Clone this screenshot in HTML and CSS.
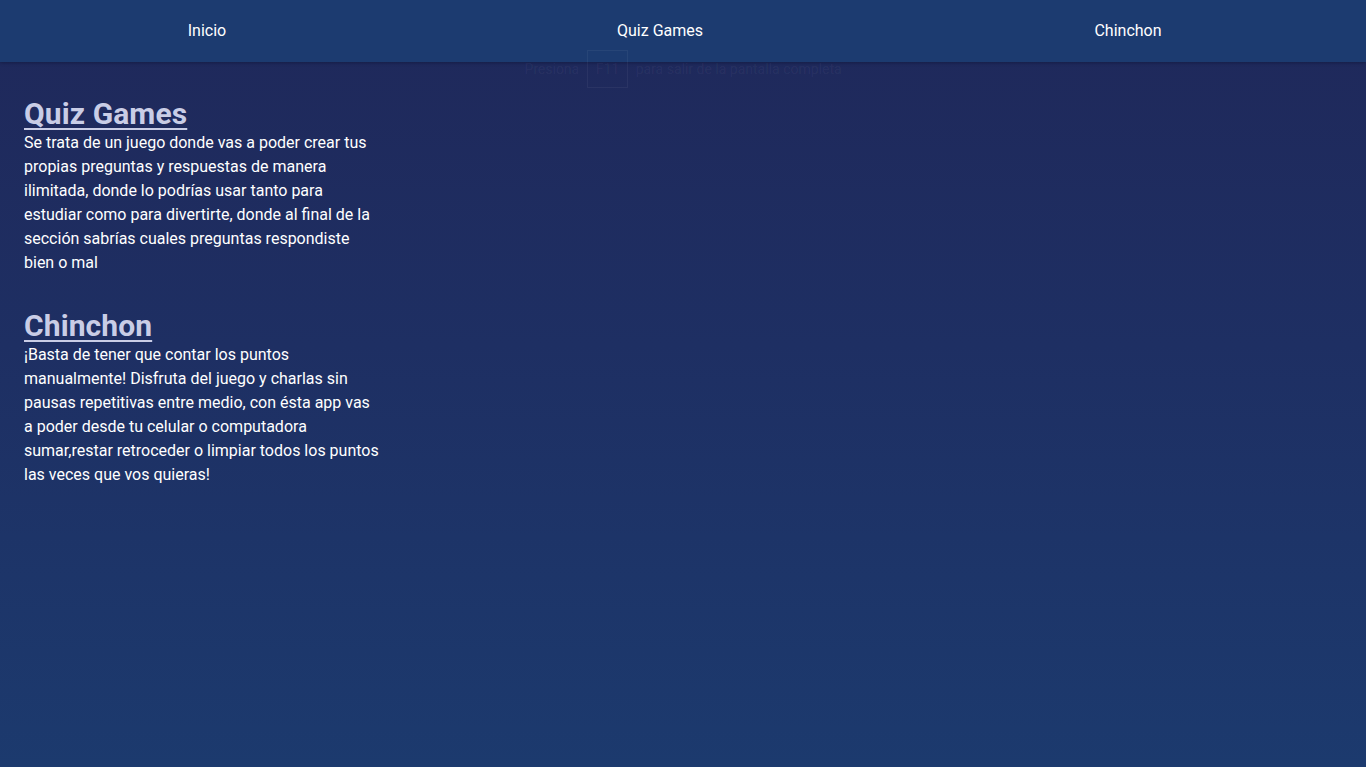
FILE: index.html
```html
<!DOCTYPE html>
<html lang="es">
<head>
<meta charset="utf-8">
<title>Juegos</title>
<link rel="stylesheet" href="styles.css">
</head>
<body>
<nav class="nav">
  <a class="nav-link" href="#">Inicio</a>
  <a class="nav-link" href="#">Quiz Games</a>
  <a class="nav-link" href="#">Chinchon</a>
</nav>
<div class="fs-hint">Presiona <span class="fs-key">F11</span> para salir de la pantalla completa</div>
<main class="content">
  <section class="game">
    <h2 class="game-title"><a href="#">Quiz Games</a></h2>
    <p class="game-text">Se trata de un juego donde vas a poder crear tus propias preguntas y respuestas de manera ilimitada, donde lo podrías usar tanto para estudiar como para divertirte, donde al final de la sección sabrías cuales preguntas respondiste bien o mal</p>
  </section>
  <section class="game">
    <h2 class="game-title"><a href="#">Chinchon</a></h2>
    <p class="game-text">¡Basta de tener que contar los puntos manualmente! Disfruta del juego y charlas sin pausas repetitivas entre medio, con ésta app vas a poder desde tu celular o computadora sumar,restar retroceder o limpiar todos los puntos las veces que vos quieras!</p>
  </section>
</main>
</body>
</html>
```
FILE: styles.css
```css
* { box-sizing: border-box; }
html, body { height: 100%; }
body {
  margin: 0;
  font-family: Roboto, "Noto Sans", Arial, sans-serif;
  color: #ffffff;
  background: linear-gradient(180deg, #1f285a 0%, #1e2f63 45%, #1c3a6e 100%);
  min-height: 767px;
}
.nav {
  position: relative;
  z-index: 2;
  height: 62px;
  background: #1c3b70;
  display: grid;
  grid-template-columns: 414px 492px 1fr;
  padding-right: 16px;
  padding-bottom: 2px;
  align-items: center;
  box-shadow: 0 1px 3px rgba(10, 15, 45, 0.45);
}
.nav-link {
  color: #ffffff;
  text-decoration: none;
  font-size: 16px;
  text-align: center;
}
.fs-hint {
  position: absolute;
  top: 50px;
  left: 0;
  right: 0;
  text-align: center;
  font-size: 14px;
  line-height: 36px;
  color: rgba(255, 255, 255, 0.05);
  z-index: 3;
  pointer-events: none;
}
.fs-key {
  display: inline-block;
  border: 1px solid rgba(255, 255, 255, 0.05);
  padding: 0 8px;
  margin: 0 4px;
}
.content {
  padding: 1px 24px 0;
}
.game {
  padding-top: 34px;
  width: 380px;
}
.game-title {
  margin: 0;
  font-size: 30px;
  font-weight: 700;
  line-height: 34px;
  letter-spacing: 0.1px;
}
.game-title a {
  color: #c9cde6;
  text-decoration: underline;
  text-decoration-thickness: 2px;
  text-underline-offset: 4px;
}
.game-text {
  margin: 0;
  font-size: 16px;
  line-height: 24px;
  padding-right: 24px;
}
```
